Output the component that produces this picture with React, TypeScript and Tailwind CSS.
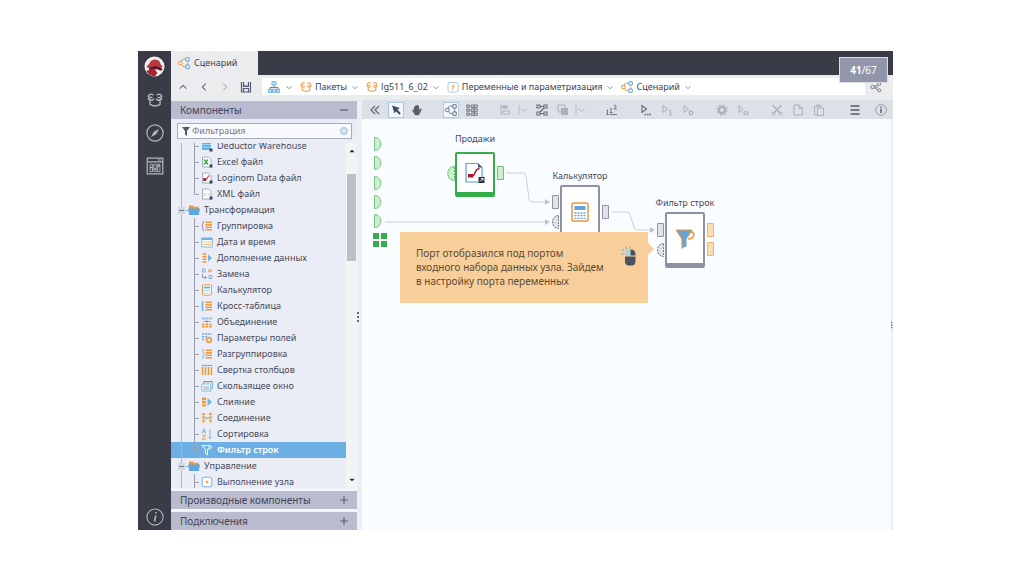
import { ReactNode, useState } from "react";
import clsx from "clsx";

const B = "#6fb1e0";
const O = "#f0973a";
const G = "#7b7f8c";

type SvgProps = {
  children: ReactNode;
  size?: string;
  className?: string;
};

// every small icon is drawn on a 12x12 grid
const Svg = ({ children, size = "size-3", className }: SvgProps) => (
  <svg
    viewBox="0 0 12 12"
    fill="none"
    aria-hidden="true"
    className={clsx(size, "shrink-0", className)}
  >
    {children}
  </svg>
);

const Chevron = () => (
  <Svg size="size-2" className="text-[#80838f]">
    <path d="M2 5 6 8.500 10 5" stroke="currentColor" strokeWidth="1.200" />
  </Svg>
);

const FlowIcon = ({ mono }: { mono?: boolean }) => (
  <Svg>
    <path d="M2.500 5C2.500 3 5 1.800 8 2M3.500 7.500C4 9 5.500 9.800 8 9.800" stroke={mono ? G : O} />
    <path d="M9.700 4v4" stroke={mono ? G : O} strokeWidth=".8" />
    <circle cx="2.400" cy="6" r="1.800" fill="#fff" stroke={mono ? G : O} strokeWidth="1.100" />
    <rect x="7.800" y=".6" width="3.500" height="3.500" rx="1" fill="#fff" stroke={mono ? G : B} strokeWidth="1.200" />
    <rect x="7.800" y="7.900" width="3.500" height="3.500" rx="1" fill="#fff" stroke={mono ? G : B} strokeWidth="1.200" />
  </Svg>
);

const BoxIcon = ({ color = O, size }: { color?: string; size?: string }) => (
  <Svg size={size}>
    <path
      d="M2.200 6v3.300q3.800 2.400 7.600 0V6M5 2.200 2.300 1.600.8 3.200l1.300.9-1.200 1.200L3.800 6.300 5.200 5M7 2.200l2.700-.6 1.500 1.600-1.300.9 1.200 1.200-2.900 1L6.800 5M2.100 4.100h2M9.900 4.100h-2"
      stroke={color}
      strokeWidth="1"
      strokeLinejoin="round"
    />
  </Svg>
);

const SitemapIcon = () => (
  <Svg>
    <path d="M6 4v2.500M2 9V6.500h8V9" stroke={G} />
    <rect x="4" y=".7" width="4" height="3.300" fill="#cfe5f5" stroke={B} />
    <rect x=".6" y="8.300" width="3" height="3" fill="#cfe5f5" stroke={B} />
    <rect x="4.500" y="8.300" width="3" height="3" fill="#cfe5f5" stroke={B} />
    <rect x="8.400" y="8.300" width="3" height="3" fill="#cfe5f5" stroke={B} />
  </Svg>
);

const VarIcon = () => (
  <Svg>
    <rect x="1" y="1.500" width="10" height="9.500" rx="1.500" stroke="#a9c9e4" />
    <path d="M7.500 3.500c-1.500 0-1.200 1.500-1.600 5H5M4.800 5.600h2.600" stroke={O} strokeWidth=".8" />
  </Svg>
);

const Marker = () => <path d="M8.500 8.500h3v3h-3z" fill="#3b4660" />;
const Sheet = () => (
  <path d="M1.500 1h6L10 3.500V11H1.500z" fill="#fff" stroke="#8fa9bd" strokeWidth=".9" />
);
const Bars = () => <path d="M4.500 2.300H11M4.500 4.800H11M4.500 7.300H11M4.500 9.800H11" stroke={O} strokeWidth="1.400" />;

const treeIcons: Record<string, ReactNode> = {
  warehouse: (
    <>
      <path d="M1 2h9v8H1z" fill="#5fb2e4" />
      <path d="M1 4.500h9M1 7.200h9" stroke="#d4ecfa" strokeWidth=".6" />
      <Marker />
    </>
  ),
  excel: (
    <>
      <Sheet />
      <path d="m3 3.500 4 5M7 3.500l-4 5" stroke="#3f9f4d" strokeWidth="1.400" />
      <Marker />
    </>
  ),
  loginom: (
    <>
      <Sheet />
      <path d="M2.500 6.500H5V8.600H2.500zM5 8c1 0 1-4 3.500-4.500" fill="#b5152b" stroke="#b5152b" strokeWidth=".8" />
      <Marker />
    </>
  ),
  xml: (
    <>
      <Sheet />
      <path d="M4.500 5 3 6.500 4.500 8M6.500 5 8 6.500 6.500 8" stroke={O} strokeWidth=".8" />
      <Marker />
    </>
  ),
  group: (
    <>
      <path d="M3 .8C1.300.8 2.500 5 .8 6 2.500 7 1.300 11.200 3 11.200" stroke={G} strokeWidth=".9" />
      <Bars />
    </>
  ),
  date: (
    <>
      <path d="M.8 2h10.400v9H.8z" fill="#fff" stroke={B} strokeWidth=".9" />
      <path d="M.8 2h10.400v2H.8z" fill={B} />
      <path d="M2.300 6h7.600M2.300 8.500h7.600" stroke={O} strokeWidth="1.200" strokeDasharray="1.300 .8" />
    </>
  ),
  supplement: (
    <>
      <path d="M1.500 2h4M1.500 4.700h4M1.500 7.300h4M1.500 10h4" stroke={O} strokeWidth="1.500" />
      <path d="M7 2.500 11 6 7 9.500z" fill={B} />
    </>
  ),
  replace: (
    <>
      <path d="M1.500 1h2.600v3H1.500zM8 7.500h2.600v3H8z" stroke={B} strokeWidth=".9" />
      <path d="M7 1.500h4v2.700H7z" fill={O} opacity=".7" />
      <path d="M1.500 6v3.500H5M3.800 8 5.300 9.500 3.800 11" stroke={G} strokeWidth=".8" />
    </>
  ),
  calc: (
    <>
      <rect x="1.500" y=".8" width="9" height="10.400" rx="1" fill="#fff" stroke={O} />
      <path d="M3 2.500h6v2H3z" fill={B} />
      <path d="M3 6.400h6M3 9h6" stroke={B} strokeDasharray="1.300 1" />
    </>
  ),
  cross: (
    <>
      <path d="M1.500 1v10" stroke={B} strokeWidth="1.500" />
      <Bars />
    </>
  ),
  union: (
    <>
      <path d="M1 1.500h3v2H1zM8 1.500h3v2H8zM4.500 1.500h3v2h-3z" fill={B} opacity=".7" />
      <path d="M6 4v3.500M2.500 5.500h7" stroke={G} strokeWidth=".7" />
      <path d="M1 8.500h10M1 10.800h10" stroke={O} strokeWidth="1.400" strokeDasharray="2.600 1" />
    </>
  ),
  params: (
    <>
      <path d="M1 2h10M1 4.800h5M1 7.600h3" stroke={B} strokeWidth="1.500" strokeDasharray="2.300 .8" />
      <circle cx="8" cy="8" r="2.400" stroke={O} strokeWidth="1.600" />
    </>
  ),
  ungroup: (
    <>
      <path d="M.8.800C2.500.8 1.500 5 3.300 6 1.500 7 2.500 11.200.8 11.200" stroke={B} strokeWidth=".9" />
      <Bars />
    </>
  ),
  collapse: (
    <>
      <path d="M.8 1.500h10.400" stroke={B} strokeWidth="1.200" />
      <path d="M1.500 3v8M4.500 3v8M7.500 3v8M10.500 3v8" stroke={O} strokeWidth="1.500" />
    </>
  ),
  window: (
    <>
      <path d="M2.500 1.500h9v7h-9z" fill="#e9f3fb" stroke={B} strokeWidth=".9" />
      <path d="M.8 4h9v7h-9z" fill="#fff" stroke={B} strokeWidth=".9" />
      <path d="M2.500 1.800h9M2.300 7h6M2.300 9h6" stroke={G} strokeWidth=".8" />
    </>
  ),
  merge: (
    <>
      <path d="M1 1.500h4v2.400H1zM1 4.800h4v2.400H1zM1 8.200h4v2.400H1z" fill={O} />
      <path d="M6.500 2 11 6 6.500 10z" fill={B} />
    </>
  ),
  join: (
    <>
      <path d="M2.500 1v10M9.500 1v10" stroke={O} strokeWidth="2.400" strokeDasharray="2.300 .9" />
      <path d="M4 6h4" stroke={B} strokeWidth="1.300" />
    </>
  ),
  sort: (
    <>
      <path d="m1 5.200 1.900-4.500 1.900 4.500M1.700 3.700h2.400" stroke={B} strokeWidth=".9" />
      <path d="M1.200 7.200h3.400l-3.400 4h3.600" stroke={O} strokeWidth=".9" />
      <path d="M9 1v9.500M7.500 9 9 10.800 10.500 9" stroke={B} strokeWidth=".8" />
    </>
  ),
  filter: (
    <path d="M1 1.500h8L6.500 5.500V11L4.500 9.500v-4zM8.500 2.300c3-.8 3 2.500-1 3" stroke="#fff" strokeLinejoin="round" />
  ),
  run: (
    <>
      <rect x="1.200" y="1.200" width="9.600" height="9.600" rx="2" fill="#fff" stroke={B} />
      <path d="M5 4.200v3.600L8 6z" fill={O} />
    </>
  ),
};

const FolderIcon = () => (
  <Svg>
    <path d="M1 1.500h3.800l1 1.200h5v3H1z" fill={O} />
    <path d="M0 4.500h12L10.800 11H1.200z" fill="#5fa8df" />
  </Svg>
);

type TreeItem = { icon: string; label: string; last?: boolean };

const sources: TreeItem[] = [
  { icon: "warehouse", label: "Deductor Warehouse" },
  { icon: "excel", label: "Excel файл" },
  { icon: "loginom", label: "Loginom Data файл" },
  { icon: "xml", label: "XML файл", last: true },
];

const transforms: TreeItem[] = [
  { icon: "group", label: "Группировка" },
  { icon: "date", label: "Дата и время" },
  { icon: "supplement", label: "Дополнение данных" },
  { icon: "replace", label: "Замена" },
  { icon: "calc", label: "Калькулятор" },
  { icon: "cross", label: "Кросс-таблица" },
  { icon: "union", label: "Объединение" },
  { icon: "params", label: "Параметры полей" },
  { icon: "ungroup", label: "Разгруппировка" },
  { icon: "collapse", label: "Свертка столбцов" },
  { icon: "window", label: "Скользящее окно" },
  { icon: "merge", label: "Слияние" },
  { icon: "join", label: "Соединение" },
  { icon: "sort", label: "Сортировка" },
  { icon: "filter", label: "Фильтр строк", last: true },
];

const Branch = ({ last }: { last?: boolean }) => (
  <svg viewBox="0 0 30 16" className="h-4 w-[30px] shrink-0" fill="none" aria-hidden="true">
    <path d="M10.500 0v16" stroke="#b2b5c1" />
    <path d={last ? "M23.500 0v8.500H28" : "M23.500 0v16M23.500 8.500H28"} stroke="#9a9dab" />
  </svg>
);

const TreeRow = ({
  item,
  selected,
  onSelect,
}: {
  item: TreeItem;
  selected: boolean;
  onSelect: (label: string) => void;
}) => (
  <button
    type="button"
    onClick={() => onSelect(item.label)}
    className={clsx(
      "flex h-4 w-full items-center text-left",
      selected && "bg-[#6cafe4] font-semibold text-white",
    )}
  >
    <Branch last={item.last} />
    <Svg>{treeIcons[item.icon]}</Svg>
    <span className="pl-1 whitespace-nowrap">{item.label}</span>
  </button>
);

const FolderRow = ({ label }: { label: string }) => (
  <button type="button" className="flex h-4 w-full items-center text-left">
    <svg viewBox="0 0 17 16" className="h-4 w-[17px] shrink-0" fill="none" aria-hidden="true">
      <path d="M10.500 0v16" stroke="#b2b5c1" />
      <path d="M7 5h7v7H7z" fill="#d3d6df" />
      <path d="M8 8.500h5" stroke="#777a88" />
      <path d="M14 8.500h3" stroke="#b2b5c1" />
    </svg>
    <FolderIcon />
    <span className="pl-1">{label}</span>
  </button>
);

const PanelHeader = ({ label, open }: { label: string; open?: boolean }) => (
  <button
    type="button"
    className="flex h-[18px] w-full shrink-0 items-center justify-between bg-[#b9bccf] pr-2 pl-[9px] text-[10px] leading-4 text-[#43465a]"
  >
    <span>{label}</span>
    <Svg size="size-2.5">
      <path d={open ? "M1.500 6h9" : "M1.500 6h9M6 1.500v9"} stroke="#565a6e" strokeWidth="1.400" />
    </Svg>
  </button>
);

const ComponentsPanel = () => {
  const [selected, setSelected] = useState("Фильтр строк");
  const [query, setQuery] = useState("");

  return (
    <aside className="flex w-[186px] shrink-0 flex-col bg-[#eaedf6]">
      <PanelHeader label="Компоненты" open />
      <div className="mr-[5px] ml-1.5 mt-1 flex h-4 shrink-0 items-center border border-[#a9acb8] bg-[#f8fafd] px-0.5">
        <Svg>
          <path d="M2 2h8L7 6v5L5 9.500V6z" fill="#555a6b" />
        </Svg>
        <input
          aria-label="Фильтрация"
          value={query}
          onChange={(e) => setQuery(e.target.value)}
          placeholder="Фильтрация"
          className="min-w-0 flex-1 bg-transparent text-[9px] leading-3 outline-none placeholder:text-[#777a85]"
        />
        <Svg size="size-2.5">
          <circle cx="6" cy="6" r="5" fill="#bfd3e6" />
          <path d="m4 4 4 4M8 4 4 8" stroke="#fff" strokeWidth="1.200" />
        </Svg>
      </div>
      <div className="mt-1 flex min-h-0 flex-1">
        <div className="min-w-0 flex-1 overflow-hidden text-[9px] leading-4 text-[#46495a]">
          <div className="-mt-[5px]">
            {sources.map((item) => (
              <TreeRow key={item.label} item={item} selected={selected === item.label} onSelect={setSelected} />
            ))}
            <FolderRow label="Трансформация" />
            {transforms.map((item) => (
              <TreeRow key={item.label} item={item} selected={selected === item.label} onSelect={setSelected} />
            ))}
            <FolderRow label="Управление" />
            <TreeRow
              item={{ icon: "run", label: "Выполнение узла" }}
              selected={selected === "Выполнение узла"}
              onSelect={setSelected}
            />
          </div>
        </div>
        <div className="flex w-[11px] shrink-0 flex-col items-center bg-[#f3f4f6] py-1">
          <Svg size="size-2">
            <path d="m2 8 4-4 4 4z" fill="#222" />
          </Svg>
          <div className="mt-[19px] h-[87px] w-[9px] bg-[#bfc0c3]" />
          <Svg size="size-2" className="mt-auto">
            <path d="m2 4 4 4 4-4z" fill="#222" />
          </Svg>
        </div>
      </div>
      <div className="flex flex-col gap-[3px] bg-[#f3f5fa] pt-[3px]">
        <PanelHeader label="Производные компоненты" />
        <PanelHeader label="Подключения" />
      </div>
    </aside>
  );
};

const crumbs: { label: string; icon: ReactNode }[] = [
  { label: "Пакеты", icon: <BoxIcon /> },
  { label: "lg511_6_02", icon: <BoxIcon /> },
  { label: "Переменные и параметризация", icon: <VarIcon /> },
  { label: "Сценарий", icon: <FlowIcon /> },
];

const NavButton = ({ label, children }: { label: string; children: ReactNode }) => (
  <button type="button" aria-label={label} className="flex w-[21px] justify-center text-[#6a6d7b]">
    {children}
  </button>
);

const Breadcrumbs = () => (
  <div className="flex h-[25px] shrink-0 items-center bg-[#ebecee] pb-0.5">
    <div className="flex w-[91px] shrink-0 items-center pl-px">
      <NavButton label="Вверх">
        <Svg size="size-2.5">
          <path d="M2 8 6 4l4 4" stroke="currentColor" strokeWidth="1.300" />
        </Svg>
      </NavButton>
      <NavButton label="Назад">
        <Svg size="size-2.5">
          <path d="M8 2 4 6l4 4" stroke="currentColor" strokeWidth="1.300" />
        </Svg>
      </NavButton>
      <NavButton label="Вперёд">
        <Svg size="size-2.5">
          <path d="m4 2 4 4-4 4" stroke="#b4b6bf" strokeWidth="1.300" />
        </Svg>
      </NavButton>
      <NavButton label="Сохранить">
        <Svg>
          <path d="M1.500 1v10h9V1M3.500 1v4.500h5V1M3.500 11V7.500h5V11" stroke="#545d75" strokeWidth="1.200" />
          <path d="M3 4.500h6v1.500H3z" fill="#545d75" />
        </Svg>
      </NavButton>
    </div>
    <nav className="flex h-[17px] min-w-0 flex-1 items-center overflow-hidden bg-white pl-1.5 text-[9px] leading-4 whitespace-nowrap text-[#3e4152]">
      <button type="button" aria-label="Корень" className="flex items-center gap-[5px]">
        <SitemapIcon />
        <Chevron />
      </button>
      {crumbs.map((crumb) => (
        <a key={crumb.label} href="#" className="ml-[7px] flex items-center">
          {crumb.icon}
          <span className="pr-1 pl-[3px]">{crumb.label}</span>
          <Chevron />
        </a>
      ))}
    </nav>
    <button type="button" aria-label="Поделиться" className="flex w-7 shrink-0 justify-center pr-1.5">
      <Svg>
        <path d="M3 6 9 3M3 6l6 3.500M5 6h3" stroke={G} />
        <circle cx="2.600" cy="6" r="1.700" fill="#ebecee" stroke={G} />
        <circle cx="9.300" cy="3" r="1.500" fill="#ebecee" stroke={G} />
        <circle cx="9.300" cy="9.300" r="1.500" fill="#ebecee" stroke={G} />
      </Svg>
    </button>
  </div>
);

type Tool = { label: string; icon: ReactNode; active?: boolean; faded?: boolean; narrow?: boolean };

const dropIcon = <path d="M3.500 4.500 6.500 7.500l3-3M1 1v10" stroke="currentColor" strokeWidth=".8" />;

const toolGroups: Tool[][] = [
  [
    {
      label: "Свернуть панель",
      icon: <path d="M6 2 2 6l4 4M10 2 6 6l4 4" stroke="currentColor" strokeWidth="1.200" />,
    },
    {
      label: "Выбор",
      active: true,
      icon: <path d="M2 1.500 9.800 4 7.500 5.500l3.300 3.800-1.500 1.400L6 7.200 4.500 9.500z" fill="#454a5c" />,
    },
    {
      label: "Перемещение",
      icon: (
        <path
          d="M3 6V3c0-.8 1.200-.8 1.200 0V2c0-.9 1.300-.9 1.300 0v-.6c0-.9 1.300-.9 1.300 0V2c0-.8 1.300-.8 1.300 0v4l1.400-1.300c.8-.5 1.400.2 1 .9L8.800 9.500 7.500 11.300H4.300L2 8 1.400 6.400C1.200 5.600 2.300 5.200 3 6z"
          fill="#585c6b"
        />
      ),
    },
  ],
  [
    { label: "Схема", active: true, icon: <FlowIcon mono /> },
    {
      label: "Список",
      icon: (
        <path
          d="M.7 1h2.600v2.300H.7zM5 1h6.300v2.300H5zM.7 5h2.600v2.300H.7zM5 5h6.300v2.300H5zM.7 9h2.600v2.300H.7zM5 9h6.300v2.300H5zM8.200 1v10"
          stroke="currentColor"
          strokeWidth=".9"
        />
      ),
    },
  ],
  [
    {
      label: "Выравнивание",
      faded: true,
      icon: (
        <>
          <path d="M1 .5v11M2.500 7h7v3h-7z" stroke="currentColor" strokeWidth=".9" />
          <path d="M2.500 1.500h5v3h-5z" fill="currentColor" />
        </>
      ),
    },
    { label: "Варианты выравнивания", faded: true, narrow: true, icon: dropIcon },
    {
      label: "Расположение",
      icon: (
        <path
          d="M1 1h3v3H1zM8 1h3v3H8zM1 8h3v3H1zM8 8h3v3H8zM4 2.500h4M4 9.500h4M4 8l4-4"
          stroke="currentColor"
          strokeWidth="1.100"
        />
      ),
    },
    {
      label: "Порядок",
      faded: true,
      icon: (
        <>
          <path d="M1 1h7v7H1z" stroke="currentColor" />
          <path d="M4 4h7v7H4z" fill="currentColor" />
        </>
      ),
    },
    { label: "Варианты порядка", faded: true, narrow: true, icon: dropIcon },
  ],
  [
    {
      label: "Нумерация",
      icon: (
        <path
          d="M.5 6.500 1.500 6v4.500M.3 10.500h2.500M4 5q2-1 1.600.8L4 8.500h2.500M8 1.500q2.500-1 2 1L8 5h3M4 10.500h7"
          stroke="currentColor"
          strokeWidth=".9"
        />
      ),
    },
  ],
  [
    {
      label: "Выполнить",
      icon: (
        <>
          <path d="M2 9V1.500L6.500 5 2 8.500" stroke="currentColor" strokeWidth="1.100" />
          <path d="M4.500 10.500H11" stroke="currentColor" strokeWidth="1.400" strokeDasharray="1.600 .8" />
        </>
      ),
    },
    {
      label: "Выполнить до узла",
      faded: true,
      icon: <path d="M2 8.500V1.500L6.500 5zM8 6.500h1.500V11M8 11h3" stroke="currentColor" />,
    },
    {
      label: "Переобучить",
      faded: true,
      icon: (
        <>
          <path d="M2 8.500V1.500L6.500 5z" stroke="currentColor" />
          <circle cx="9" cy="9" r="1.800" stroke="currentColor" strokeWidth="1.200" />
        </>
      ),
    },
  ],
  [
    {
      label: "Настроить",
      faded: true,
      icon: (
        <>
          <circle cx="6" cy="6" r="3" stroke="currentColor" strokeWidth="2.200" />
          <circle cx="6" cy="6" r="4.800" stroke="currentColor" strokeWidth="1.300" strokeDasharray="2 1.770" />
        </>
      ),
    },
    {
      label: "Просмотр",
      faded: true,
      icon: <path d="M2 8.500V2l4 3.300zM7 7.800h4v2.500H7z" stroke="currentColor" />,
    },
  ],
  [
    {
      label: "Вырезать",
      faded: true,
      icon: (
        <>
          <path d="M1.500 1 9 9M10.500 1 3 9" stroke="currentColor" strokeWidth="1.300" />
          <circle cx="2.500" cy="9.700" r="1.400" stroke="currentColor" />
          <circle cx="9.500" cy="9.700" r="1.400" stroke="currentColor" />
        </>
      ),
    },
    {
      label: "Копировать",
      faded: true,
      icon: <path d="M2 1h5l3.500 3.500V11H2zM7 1v3.500h3.500" stroke="currentColor" />,
    },
    {
      label: "Вставить",
      faded: true,
      icon: <path d="M3.500 2H1.500v9h3M8.500 2V3M3.500 1h4v1.500h-4zM4.500 4h6v7.500h-6z" stroke="currentColor" />,
    },
  ],
];

const ToolButton = ({ tool }: { tool: Tool }) => (
  <button
    type="button"
    aria-label={tool.label}
    className={clsx(
      "flex h-4 items-center justify-center",
      tool.narrow ? "w-2.5" : "w-4",
      tool.active && "border border-[#a9cbe2] bg-[#f1f8fd]",
      tool.faded ? "text-[#adb0b8]" : "text-[#646876]",
    )}
  >
    <Svg>{tool.icon}</Svg>
  </button>
);

const Toolbar = () => (
  <div className="flex h-[19px] shrink-0 items-center gap-[18px] bg-[#dee0e7] pr-1 pl-[5px]">
    {toolGroups.map((group) => (
      <div key={group[0].label} className="flex gap-[5px]">
        {group.map((tool) => (
          <ToolButton key={tool.label} tool={tool} />
        ))}
      </div>
    ))}
    <div className="ml-auto flex gap-2.5">
      <ToolButton
        tool={{ label: "Меню", icon: <path d="M1.500 2h9M1.500 6h9M1.500 10h9" stroke="#555968" strokeWidth="1.500" /> }}
      />
      <ToolButton
        tool={{
          label: "Информация",
          icon: (
            <>
              <circle cx="6" cy="6" r="5.300" stroke="#858996" strokeWidth=".8" />
              <path d="M6 5v4M6 2.800v1.400" stroke="#555968" strokeWidth="1.400" />
            </>
          ),
        }}
      />
    </div>
  </div>
);

const ScenarioWires = () => (
  <svg viewBox="0 0 360 160" className="absolute top-0 left-0 h-40 w-[360px]" fill="none" aria-hidden="true">
    <path
      d="M144 54h17q3 0 3 3l3 23q1 3 4 3h14M23 103h162M250 93h15q3 0 3 3l4 12q1 3 4 3h14"
      stroke="#cdd0d4"
    />
    <path d="m183 80 5 3-5 3zM183 100l5 3-5 3zM288 108l5 3-5 3z" fill="#c0c3c8" />
    {[25, 44, 64, 83, 102].map((y) => (
      <path
        key={y}
        transform={`translate(12 ${y})`}
        d="M.5-6.500C9-6.500 9 6.500.5 6.500z"
        fill="#c9efcb"
        stroke="#7fc189"
      />
    ))}
    <path d="M11 114h6v6h-6zM19 114h6v6h-6zM11 122h6v6h-6zM19 122h6v6h-6z" fill="#35ad49" />
    <path d="M92.500 47.500c-9 0-9 14 0 14z" fill="#c9efcb" stroke="#4caf5c" strokeDasharray="2 1" />
    <path d="M135.500 47.500h6v13h-6z" fill="#c9efcb" stroke="#6cc078" />
    <g fill="#e1e3ea" stroke="#9194a3">
      <path d="M190.500 76.500h6v13h-6zM240.500 86.500h6v13h-6zM295.500 104.500h6v13h-6z" />
      <path d="M196.500 96.500c-8 0-8 13 0 13zM301.500 124.500c-8 0-8 13 0 13z" stroke="#777a88" strokeDasharray="2 1" />
    </g>
    <path d="M345.500 104.500h6v13h-6zM345.500 123.500h6v13h-6z" fill="#fcdcb8" stroke="#f3b36d" />
  </svg>
);

const ScenarioNode = ({
  label,
  place,
  frame,
  icon,
}: {
  label: string;
  place: string;
  frame: string;
  icon: ReactNode;
}) => (
  <div className={clsx("absolute flex w-20 flex-col items-center", place)}>
    <span className="text-[9px] leading-4 whitespace-nowrap text-[#45485a]">{label}</span>
    <div className={clsx("flex w-10 items-center justify-center rounded-xs border-2 border-b-[5px] bg-white", frame)}>
      {icon}
    </div>
  </div>
);

const SalesIcon = () => (
  <svg viewBox="0 0 20 22" className="h-[22px] w-5" fill="none" aria-hidden="true">
    <path d="M1 1.500h12l4 4V20H1z" fill="#fff" stroke="#5d9ed6" strokeWidth="1.200" />
    <path d="M13 1.500v4h4z" fill="#45537a" />
    <path d="M3 12h5v3.500H3z" fill="#b01128" />
    <path d="M7 14.500c3.500-.5 2-7.500 7.500-8" stroke="#b01128" strokeWidth="1.500" />
    <path d="M13.500 15h6v6h-6z" fill="#2b3145" />
    <path d="m15 19.500 3-3M16 16.500h2v2" stroke="#fff" strokeWidth=".9" />
  </svg>
);

const CalculatorIcon = () => (
  <svg viewBox="0 0 18 20" className="h-5 w-[18px]" fill="none" aria-hidden="true">
    <rect x="1" y="1" width="16" height="18" rx="2" fill="#fff" stroke="#ee9537" strokeWidth="1.500" />
    <path d="M3.500 4h11v4h-11z" fill="#62a5dd" />
    <path d="M3.500 11h11M3.500 13.700h11M3.500 16.400h11" stroke="#62a5dd" strokeWidth="1.300" strokeDasharray="2 1" />
  </svg>
);

const FunnelIcon = () => (
  <svg viewBox="0 0 20 20" className="size-5" fill="none" aria-hidden="true">
    <path d="M15.500 3c5-1 4.500 7-2.500 7" stroke="#ee9537" strokeWidth="1.600" />
    <path d="M1 1h16l-5.500 9v7.500L7 19v-9z" fill="#62a5dd" />
    <path d="M1 1h16M1.500 1.500 7 10v9l1.500-.7M17 1l-4 6.500" stroke="#ee9537" strokeWidth="1.200" />
  </svg>
);

const Callout = () => (
  <div className="absolute top-[113px] left-[38px] flex h-[71px] w-[248px] justify-between bg-[#f8cf9a] py-3.5 pr-[11px] pl-4 text-[#5b4a37]">
    <p className="text-[10px] leading-[14px] whitespace-nowrap">
      Порт отобразился под портом
      <br />
      входного набора данных узла. Зайдем
      <br />
      в настройку порта переменных
    </p>
    <svg viewBox="0 0 16 20" className="h-5 w-4 shrink-0" fill="none" aria-hidden="true">
      <path d="M4 10.500h10.500V15q0 4.500-4 4.500H8q-4 0-4-4.500z" fill="#4b5163" />
      <path d="M9.500 3.500q5 0 5 5V9.500h-5z" fill="#4b5163" />
      <path d="M8.500 3.500Q4 3.500 4 8.500v1h4.500z" fill="#9ed4f0" />
      <path d="M2.500 8H0M3 5 1 3.500M5.300 3 4.500.8M8.500 2.500 9 .5" stroke="#79b9d8" strokeWidth="1.300" />
    </svg>
    <svg viewBox="0 0 6 12" className="absolute top-[11px] left-full h-3 w-1.5" aria-hidden="true">
      <path d="m0 0 6 6-6 6z" fill="#f8cf9a" />
    </svg>
  </div>
);

const Canvas = () => (
  <div className="relative min-h-0 flex-1 overflow-hidden bg-[#f9fdff]">
    <ScenarioWires />
    <ScenarioNode
      label="Продажи"
      place="top-3 left-[73px]"
      frame="mt-[5px] h-[45px] border-[#35ad49]"
      icon={<SalesIcon />}
    />
    <ScenarioNode
      label="Калькулятор"
      place="top-[49px] left-[178px]"
      frame="mt-px h-14 border-[#8e91a3]"
      icon={<CalculatorIcon />}
    />
    <ScenarioNode
      label="Фильтр строк"
      place="top-[76px] left-[283px]"
      frame="mt-px h-14 border-[#8e91a3]"
      icon={<FunnelIcon />}
    />
    <Callout />
  </div>
);

const SideButton = ({ label, children, className }: { label: string; children: ReactNode; className?: string }) => (
  <button type="button" aria-label={label} className={className}>
    {children}
  </button>
);

const Sidebar = () => (
  <div className="flex w-[33px] shrink-0 flex-col items-center gap-[15px] bg-[#393b46] pt-[5px] pb-1 text-[#b2b5bf]">
    <svg viewBox="0 0 22 22" className="size-[21px] shrink-0" aria-hidden="true">
      <circle cx="11" cy="11" r="10.500" fill="#f6f1f1" />
      <path d="M3 12c-.5-2 1.500-2.500 2.500-4C7 4.500 10 3 13 4c2.500.5 4 2 4.500 5l2.500 2.500-3 .5-7-1-4 1.500z" fill="#b8383c" />
      <path d="m5 12.500 6-2 7 1.500 1.500 2.500-2.500 1-3-1.500-4 .5-4 1z" fill="#571b25" />
      <path d="M2.500 15.500 9 13.500l3 1.500 2 2.500-2.500 4C7.500 21.500 4 19.500 2.500 15.500z" fill="#a8272f" />
    </svg>
    <SideButton label="Пакеты">
      <BoxIcon color="currentColor" size="size-4" />
    </SideButton>
    <SideButton label="Навигация" className="mt-px">
      <Svg size="size-[18px]">
        <circle cx="6" cy="6" r="5.400" stroke="currentColor" strokeWidth=".8" />
        <path d="M8.800 3.200 6.800 6.800 3.200 8.800l2-3.600z" fill="currentColor" />
      </Svg>
    </SideButton>
    <SideButton label="Администрирование">
      <Svg size="size-[18px]">
        <path d="M.8.800h10.400v10.400H.8zM.8 3.300h10.400M8 2h2" stroke="currentColor" strokeWidth=".8" />
        <path d="M2.700 4.800h1.600v5H2.700zM5.200 4.800h1.600v5H5.200zM7.700 4.800h1.600v5H7.700z" stroke="currentColor" strokeWidth=".6" />
        <path d="M2.700 6.500h1.600v1H2.700zM5.200 7.500h1.600v1H5.200zM7.700 5.500h1.600v1H7.700z" fill="currentColor" />
      </Svg>
    </SideButton>
    <SideButton label="О программе" className="mt-auto">
      <Svg size="size-[18px]">
        <circle cx="6" cy="6" r="5.400" stroke="currentColor" strokeWidth=".7" />
        <path d="M6.500 5 5.700 9M6.700 2.800l-.2 1" stroke="currentColor" strokeWidth="1.100" />
      </Svg>
    </SideButton>
  </div>
);

const Grip = () => (
  <svg viewBox="0 0 3 12" className="h-3 w-[3px]" aria-hidden="true">
    <path d="M0 1h2v2H0zM0 5h2v2H0zM0 9h2v2H0z" fill="#6a6c76" />
  </svg>
);

const App = () => {
  return (
    <div className="h-screen bg-white pt-[51px] pr-[131px] pb-11 pl-[138px] font-['Noto_Sans',sans-serif]">
      <div className="relative flex h-full">
        <Sidebar />
        <div className="flex min-w-0 flex-1 flex-col">
          <header className="flex h-6 shrink-0 bg-[#393b46]">
            <button
              type="button"
              className="flex w-[87px] items-center gap-1 bg-[#ebecee] pl-[7px] text-[9px] leading-4 text-[#3e4152]"
            >
              <FlowIcon />
              Сценарий
            </button>
          </header>
          <Breadcrumbs />
          <div className="flex min-h-0 flex-1 bg-[#edf0f3]">
            <div className="flex pt-px">
              <ComponentsPanel />
            </div>
            <div className="flex w-[5px] shrink-0 items-center pt-1">
              <Grip />
            </div>
            <main className="flex min-w-0 flex-1 flex-col">
              <Toolbar />
              <div className="flex min-h-0 flex-1">
                <Canvas />
                <div className="flex w-0.5 shrink-0 items-center bg-[#edeef0]">
                  <Grip />
                </div>
              </div>
            </main>
          </div>
        </div>
        <div className="absolute top-[6px] right-[5px] flex h-[26px] w-[49px] items-center justify-center border border-[#dcdee6] bg-[#9296aa] text-[10px] leading-4 text-white">
          <b>41</b>/67
        </div>
      </div>
    </div>
  );
};

export default App;
